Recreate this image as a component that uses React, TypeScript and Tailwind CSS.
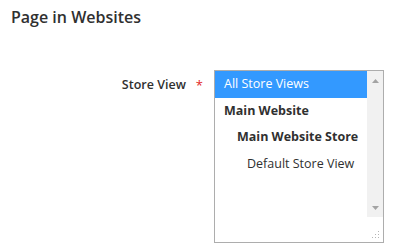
import React from 'react'

const OPTIONS = [
  { label: 'All Store Views', indent: 'pl-[9px]', weight: 'font-normal', selected: true },
  { label: 'Main Website', indent: 'pl-[9px]', weight: 'font-bold', selected: false },
  { label: 'Main Website Store', indent: 'pl-[22px]', weight: 'font-bold', selected: false },
  { label: 'Default Store View', indent: 'pl-[32px]', weight: 'font-normal', selected: false },
]

function Scrollbar() {
  return (
    <div className="flex flex-col w-[16px]">
      <div className="flex flex-col h-[146px] bg-[#f1f1f1]">
        <div className="flex h-[16px] items-center justify-center pt-[3px]">
          <svg width="7" height="4" viewBox="0 0 7 4">
            <path d="M3.5 0 L7 4 L0 4 Z" fill="#a3a3a3" />
          </svg>
        </div>
        <div className="flex-1" />
        <div className="flex h-[16px] items-center justify-center pb-[3px]">
          <svg width="7" height="4" viewBox="0 0 7 4">
            <path d="M0 0 L7 0 L3.5 4 Z" fill="#a3a3a3" />
          </svg>
        </div>
      </div>
      <div className="flex flex-1 items-end justify-end pr-[3px] pb-[3px]">
        <svg width="8" height="8" viewBox="0 0 8 8">
          <rect x="6" y="0" width="1" height="1" fill="#b5b5b5" />
          <rect x="3" y="3" width="1" height="1" fill="#b5b5b5" />
          <rect x="6" y="3" width="1" height="1" fill="#b5b5b5" />
          <rect x="0" y="6" width="1" height="1" fill="#b5b5b5" />
          <rect x="3" y="6" width="1" height="1" fill="#b5b5b5" />
          <rect x="6" y="6" width="1" height="1" fill="#b5b5b5" />
        </svg>
      </div>
    </div>
  )
}

export default function App() {
  return (
    <div className="w-[393px] h-[246px] bg-white text-[#303030] font-['Open_Sans',sans-serif] overflow-hidden">
      <h2 className="pl-[11px] pt-[7px] text-[16px] leading-[20px] font-semibold">Page in Websites</h2>

      <div className="flex mt-[43px]">
        <div className="flex w-[214px] justify-end pr-[11px] pt-[2px] leading-[26px]">
          <label className="text-[12.5px] font-semibold">Store View</label>
          <span className="ml-[10px] text-[13px] text-[#e22626]">*</span>
        </div>

        <div className="flex w-[170px] h-[173px] border border-[#adadad]">
          <div className="flex flex-col flex-1 text-[12.5px]">
            {OPTIONS.map((opt) => (
              <div
                key={opt.label}
                className={`h-[26.7px] leading-[26px] ${opt.indent} ${opt.weight} ${
                  opt.selected ? 'bg-[#3399ff] text-white' : ''
                }`}
              >
                {opt.label}
              </div>
            ))}
          </div>
          <Scrollbar />
        </div>
      </div>
    </div>
  )
}
